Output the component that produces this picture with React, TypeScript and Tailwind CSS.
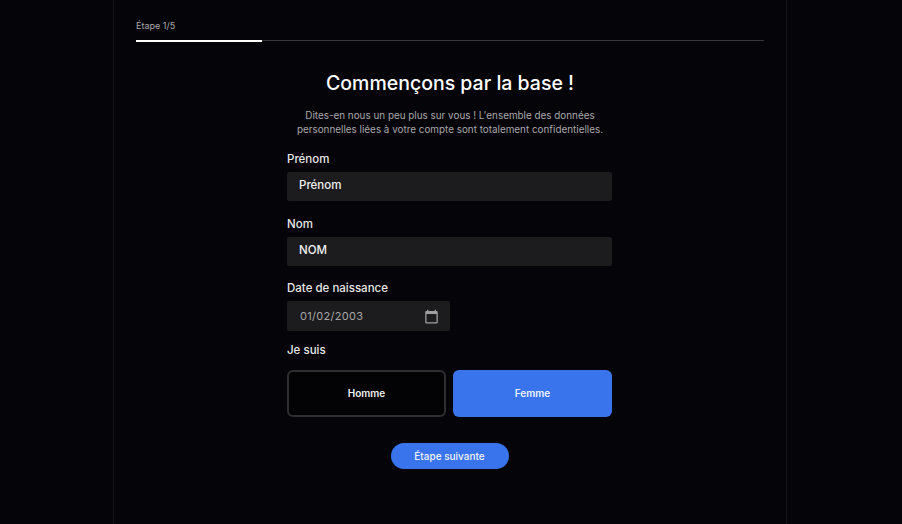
const font = { fontFamily: "Inter, sans-serif" };

function Field({ label, value }: { label: string; value: string }) {
  return (
    <div className="mb-[15.5px]">
      <p className="text-[11.5px] leading-[14px] font-medium text-[#e8e8e8] mb-[6px]">{label}</p>
      <div className="h-[29px] w-[325px] bg-[#1c1c1e] rounded-[2px] flex items-center pl-[12px] pb-[1px] text-[11.5px] font-medium text-[#f2f2f2]">
        {value}
      </div>
    </div>
  );
}

export default function App() {
  return (
    <div className="h-[524px] w-[902px] overflow-hidden bg-[#050409] pl-[113px]" style={font}>
      <main className="w-[674px] h-full border-x border-[#161519] px-[22px]">
        <p className="pt-[20px] text-[9px] leading-[11px] text-[#a9a9ab]">Étape 1/5</p>
        <div className="mt-[9px] h-[1px] bg-[#38383a]">
          <div className="w-[126px] h-[2px] bg-white" />
        </div>

        <section className="flex flex-col items-center">
          <h1 className="mt-[30px] text-[19.5px] leading-[24px] font-medium text-white">Commençons par la base !</h1>
          <p className="mt-[13px] text-center text-[9.9px] leading-[14px] text-[#a8a8aa]">
            Dites-en nous un peu plus sur vous ! L'ensemble des données
            <br />
            personnelles liées à votre compte sont totalement confidentielles.
          </p>

          <form className="w-[325px] mt-[16px] self-start ml-[151px]">
            <Field label="Prénom" value="Prénom" />
            <Field label="Nom" value="NOM" />

            <p className="text-[11.5px] leading-[14px] font-medium text-[#e8e8e8] mb-[6px]">Date de naissance</p>
            <div className="h-[30px] w-[163px] bg-[#1c1c1e] rounded-[2px] flex items-center justify-between pl-[13px] pr-[11px] text-[11px] tracking-[0.3px] text-[#a6a6a8]">
              <span>01/02/2003</span>
              <svg viewBox="0 0 24 24" className="w-[15px] h-[15px]" fill="#a0a0a2">
                <path d="M20 3h-1V1h-2v2H7V1H5v2H4c-1.1 0-2 .9-2 2v16c0 1.1.9 2 2 2h16c1.1 0 2-.9 2-2V5c0-1.1-.9-2-2-2zm0 18H4V8h16v13z" />
              </svg>
            </div>

            <p className="mt-[12px] text-[11.5px] leading-[14px] font-medium text-[#e8e8e8]">Je suis</p>
            <div className="mt-[13px] flex gap-[7px]">
              <button type="button" className="h-[47px] w-[159px] rounded-[6px] border-2 border-[#2f2f31] bg-[#030205] text-[10px] font-semibold text-[#f0f0f0]">
                Homme
              </button>
              <button type="button" className="h-[47px] w-[159px] rounded-[6px] bg-[#3a74ec] text-[10px] font-semibold text-[#eef3ff]">
                Femme
              </button>
            </div>
            <div className="mt-[26px] flex justify-center">
              <button type="button" className="h-[26px] w-[118px] rounded-full bg-[#3a74ec] text-[10px] font-medium text-[#eef3ff]">
                Étape suivante
              </button>
            </div>
          </form>
        </section>
      </main>
    </div>
  );
}
